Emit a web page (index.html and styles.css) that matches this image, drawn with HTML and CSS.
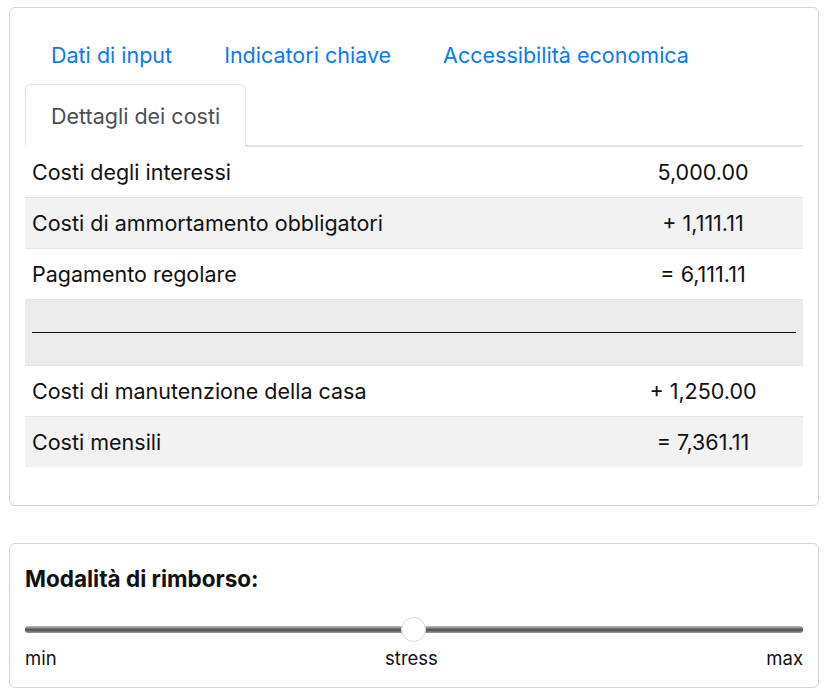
FILE: index.html
```html
<!DOCTYPE html>
<html lang="it">
<head>
  <meta charset="UTF-8">
  <meta name="viewport" content="width=device-width, initial-scale=1.0">
  <title>Dettagli dei costi</title>
  <link rel="stylesheet" href="styles.css">
</head>
<body>
  <div class="card">
    <ul class="tabs">
      <li><a href="#input">Dati di input</a></li>
      <li><a href="#indicatori">Indicatori chiave</a></li>
      <li><a href="#accessibilita">Accessibilità economica</a></li>
      <li><a href="#costi" class="active">Dettagli dei costi</a></li>
    </ul>
    <table class="costs">
      <tr>
        <td>Costi degli interessi</td>
        <td class="value">5,000.00</td>
      </tr>
      <tr class="shade">
        <td>Costi di ammortamento obbligatori</td>
        <td class="value">+ 1,111.11</td>
      </tr>
      <tr>
        <td>Pagamento regolare</td>
        <td class="value">= 6,111.11</td>
      </tr>
      <tr class="divider">
        <td colspan="2"><hr></td>
      </tr>
      <tr>
        <td>Costi di manutenzione della casa</td>
        <td class="value">+ 1,250.00</td>
      </tr>
      <tr class="shade">
        <td>Costi mensili</td>
        <td class="value">= 7,361.11</td>
      </tr>
    </table>
  </div>

  <div class="card slider-card">
    <h3>Modalità di rimborso:</h3>
    <div class="slider">
      <div class="track"></div>
      <div class="thumb"></div>
    </div>
    <div class="labels">
      <span>min</span>
      <span>stress</span>
      <span>max</span>
    </div>
  </div>
</body>
</html>
```

FILE: styles.css
```css
body {
  font-family: Inter, "Liberation Sans", Arial, sans-serif;
  color: #111;
  background-color: #fff;
  margin: 7px 9px;
}
.card {
  border: 1px solid #d4d4d4;
  border-radius: 6px;
  padding: 15px 15px 38px;
}
.tabs {
  list-style: none;
  margin: 0;
  padding: 0;
  display: flex;
  flex-wrap: wrap;
  border-bottom: 2px solid #e3e3e3;
}
.tabs li {
  display: flex;
}
.tabs a {
  display: flex;
  align-items: center;
  height: 61px;
  padding: 0 25px;
  font-size: 21.5px;
  color: #0a7af4;
  text-decoration: none;
  border: 1px solid transparent;
  border-radius: 6px 6px 0 0;
  margin-bottom: -2px;
}
.tabs a.active {
  color: #4b5056;
  background-color: #fff;
  border-color: #e3e3e3 #e3e3e3 #fff;
}
.costs {
  width: 100%;
  border-collapse: collapse;
  font-size: 21.5px;
}
.costs td {
  height: 50px;
  padding: 0 7px;
  border-top: 1px solid #e4e4e4;
}
.costs tr:first-child td {
  border-top: none;
}
.costs .value {
  width: 186px;
  text-align: center;
}
.costs .shade {
  background-color: #f2f2f2;
}
.costs .divider td {
  height: 65px;
  background-color: #ebebeb;
}
.costs hr {
  margin: 0;
  border: none;
  border-top: 1px solid #111;
}
.slider-card {
  margin-top: 37px;
  padding: 23px 15px 18px;
}
.slider-card h3 {
  margin: 0;
  font-size: 22.5px;
  font-weight: 700;
  line-height: 24px;
}
.slider {
  position: relative;
  height: 24px;
  margin-top: 26px;
  display: flex;
  align-items: center;
}
.track {
  flex: 1;
  height: 7px;
  border-radius: 3px;
  background: linear-gradient(#c4c4c4, #4d4d4d 55%, #9a9a9a);
}
.thumb {
  position: absolute;
  left: 376px;
  top: 0;
  width: 23px;
  height: 23px;
  border-radius: 50%;
  background-color: #fff;
  border: 1px solid #d8d8d8;
}
.labels {
  display: flex;
  justify-content: space-between;
  margin-top: 6px;
  font-size: 18.5px;
  line-height: 22px;
}
```
